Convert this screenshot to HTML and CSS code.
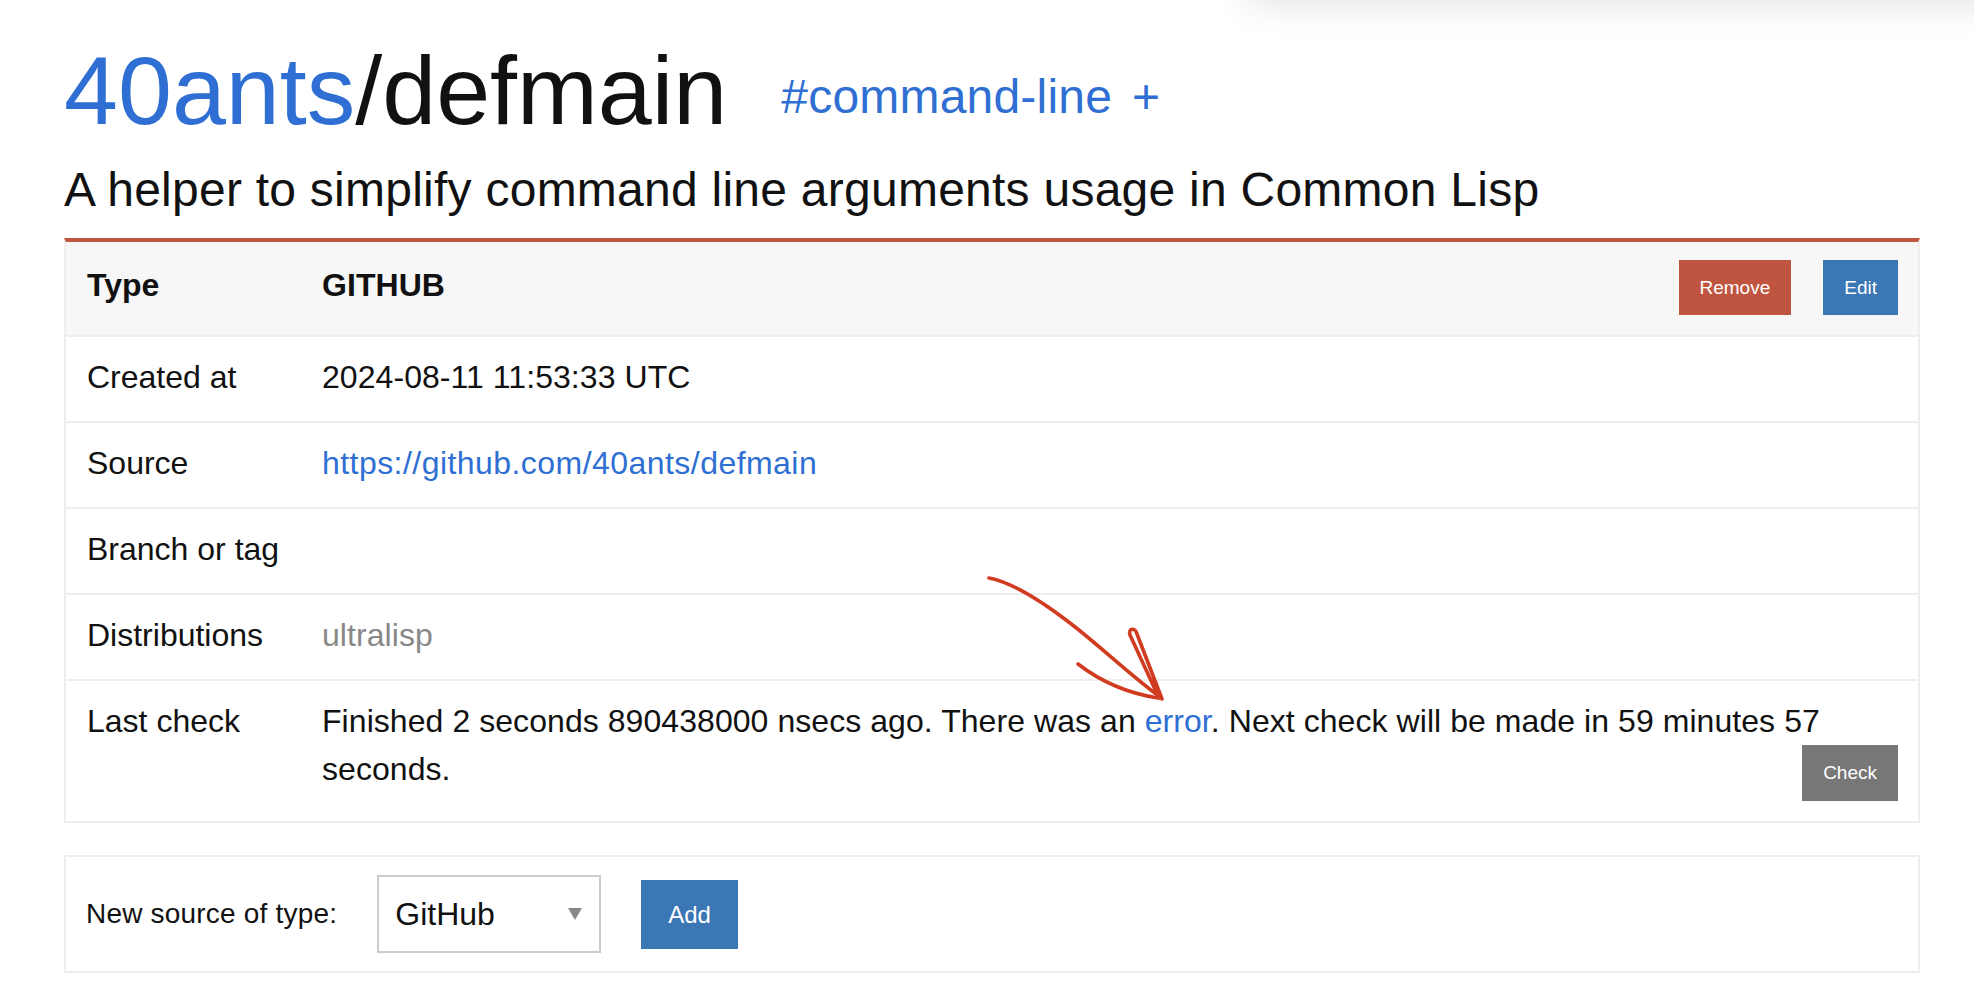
FILE: index.html
```html
<!DOCTYPE html>
<html lang="en">
<head>
<meta charset="utf-8">
<title>40ants/defmain</title>
<link rel="stylesheet" href="styles.css">
</head>
<body>
<div class="top-shadow"></div>
<main class="page">
  <h1 class="title"><a class="owner" href="#">40ants</a>/defmain<span class="tags"><a class="tag" href="#">#command-line</a><a class="tag tag-add" href="#">+</a></span></h1>
  <p class="subtitle">A helper to simplify command line arguments usage in Common Lisp</p>

  <table class="source">
    <thead>
      <tr>
        <th class="label">Type</th>
        <th class="value">
          <div class="head-row">
            <span class="head-title">GITHUB</span>
            <span class="actions">
              <button class="btn btn-red">Remove</button>
              <button class="btn btn-blue">Edit</button>
            </span>
          </div>
        </th>
      </tr>
    </thead>
    <tbody>
      <tr><td class="label">Created at</td><td>2024-08-11 11:53:33 UTC</td></tr>
      <tr><td class="label">Source</td><td><a class="src-link" href="#">https://github.com/40ants/defmain</a></td></tr>
      <tr><td class="label">Branch or tag</td><td></td></tr>
      <tr><td class="label">Distributions</td><td class="muted">ultralisp</td></tr>
      <tr><td class="label">Last check</td><td>Finished 2 seconds 890438000 nsecs ago. There was an <a href="#">error</a>. Next check will be made in 59 minutes 57 seconds. <button class="btn btn-gray">Check</button></td></tr>
    </tbody>
  </table>

  <form class="new-source">
    <span class="new-label">New source of type:</span>
    <div class="select"><span>GitHub</span><span class="caret"></span></div>
    <button type="button" class="btn btn-add">Add</button>
  </form>
</main>

<svg class="annotation" width="220" height="160" viewBox="0 0 220 160" fill="none" stroke="#d13b20" stroke-width="3.6" stroke-linecap="round" stroke-linejoin="round">
  <path d="M19 18 C 40 22, 70 40, 100 63 S 160 115, 190 137"/>
  <path d="M108 104 C 130 121, 156 133, 188 138"/>
  <path d="M189 138 L 160 75 C 158 68, 165 67, 167 74 L 192 139"/>
</svg>
</body>
</html>
```

FILE: styles.css
```css
* { box-sizing: border-box; }

body {
  margin: 0;
  background: #ffffff;
  color: #111111;
  font-family: "Liberation Sans", Arial, Helvetica, sans-serif;
}

a { color: #2f6fd3; text-decoration: none; }

.top-shadow {
  position: absolute;
  top: -50px;
  left: 1250px;
  width: 820px;
  height: 50px;
  background: #fff;
  box-shadow: 0 0 40px rgba(0, 0, 0, 0.14);
}

.page {
  padding: 36px 54px 40px 64px;
}

.title {
  margin: 0;
  font-size: 97px;
  font-weight: normal;
  line-height: 110px;
  white-space: nowrap;
}

.tags {
  font-size: 48px;
  line-height: 1;
  margin-left: 54px;
  vertical-align: 11px;
  letter-spacing: 0.2px;
}

.tag-add { margin-left: 20px; }

.subtitle {
  margin: 16px 0 0;
  font-size: 48px;
  line-height: 55px;
  letter-spacing: 0.25px;
}

.source {
  margin-top: 21px;
  width: 100%;
  table-layout: fixed;
  border-collapse: separate;
  border-spacing: 0;
  border: 2px solid #eeeeee;
  border-top: 4px solid #bf5641;
  font-size: 32px;
  line-height: 48px;
  letter-spacing: 0.06px;
}

.source th,
.source td {
  text-align: left;
  vertical-align: top;
  padding: 16px 20px 20px 21px;
  border-top: 2px solid #eeeeee;
}

.source thead th {
  background: #f7f7f7;
  border-top: 0;
  padding: 18px 20px 20px 21px;
  vertical-align: middle;
  font-weight: bold;
}

.source thead th.label {
  vertical-align: top;
  padding-top: 19px;
}

.source .label {
  width: 235px;
  white-space: nowrap;
  letter-spacing: 0;
}

.head-title { margin-bottom: 5px; }

.src-link { letter-spacing: 0.45px; }

.muted { color: #888888; }

.head-row {
  display: flex;
  align-items: center;
}

.actions {
  margin-left: auto;
  display: flex;
  gap: 32px;
}

.btn {
  font-family: inherit;
  font-size: 19px;
  font-weight: normal;
  letter-spacing: 0;
  color: #ffffff;
  border: 0;
  border-radius: 0;
  height: 55px;
  line-height: 55px;
  padding: 0 21px;
  cursor: pointer;
}

.btn-red { background: #bf5540; }
.btn-blue { background: #3a77b4; }

.btn-gray {
  background: #777777;
  float: right;
  height: 56px;
  line-height: 56px;
}

.new-source {
  margin: 32px 0 0;
  border: 2px solid #eeeeee;
  padding: 18px 20px;
  display: flex;
  align-items: center;
  gap: 40px;
  font-size: 28px;
}

.new-label { letter-spacing: 0.2px; }

.select {
  width: 224px;
  height: 78px;
  border: 2px solid #cccccc;
  display: flex;
  align-items: center;
  padding: 0 17px 0 16px;
  font-size: 32px;
  background: #fff;
}

.caret {
  margin-left: auto;
  width: 0;
  height: 0;
  border-left: 7px solid transparent;
  border-right: 7px solid transparent;
  border-top: 12px solid #888888;
}

.btn-add {
  font-size: 24px;
  height: 69px;
  line-height: 69px;
  padding: 0 27px;
  background: #3a77b4;
}

.annotation {
  position: absolute;
  left: 970px;
  top: 560px;
}
```
